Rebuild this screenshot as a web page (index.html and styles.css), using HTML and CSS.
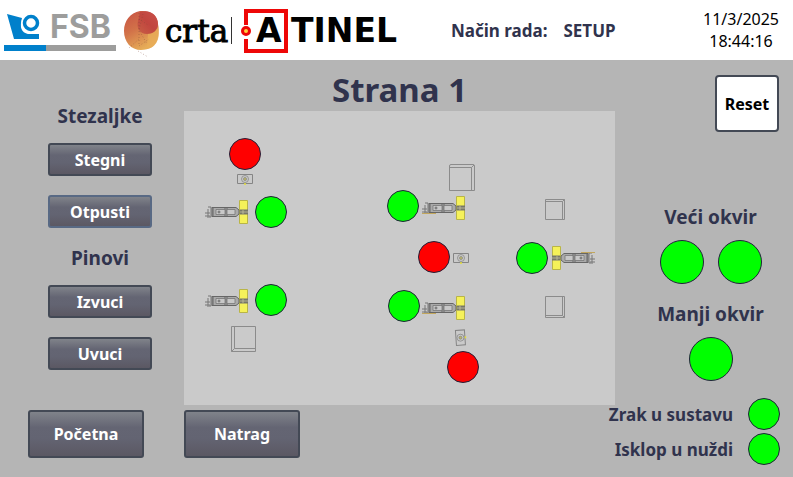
FILE: index.html
```html
<!DOCTYPE html>
<html lang="hr">
<head>
<meta charset="utf-8">
<meta name="viewport" content="width=device-width, initial-scale=1">
<title>Strana 1</title>
<link rel="stylesheet" href="styles.css">
</head>
<body>
<header class="topbar">
  <div class="logos">
    <svg width="120" height="60" viewBox="0 0 120 60" role="img" aria-label="FSB">
      <path d="M7 14 L22 18 Q18 32 28 34 H39 V39 H14 Z" fill="#0080cb"/>
      <circle cx="31" cy="24" r="10" fill="#fff"/>
      <circle cx="31" cy="23" r="6.5" fill="none" stroke="#0080cb" stroke-width="3.500"/>
      <path d="M24 33 Q30 37 39 34 V39 H22 Z" fill="#0080cb"/>
      <text class="logo-fsb" x="50" y="38">FSB</text>
      <path d="M4 45 H46 V51 H4 Z" fill="#0080cb"/>
      <path d="M46 45 H116 V51 H46 Z" fill="#9d9d9c"/>
    </svg>
    <svg width="114" height="60" viewBox="120 0 114 60" role="img" aria-label="crta">
      <defs>
        <linearGradient id="low" x1="0" y1="0" x2="0.5" y2="1"><stop offset="0" stop-color="#c75043"/><stop offset="0.5" stop-color="#d27249"/><stop offset="1" stop-color="#e6ad58"/></linearGradient>
        <linearGradient id="high" x1="0" y1="1" x2="1" y2="0"><stop offset="0" stop-color="#c85f45"/><stop offset="0.5" stop-color="#c1463f"/><stop offset="1" stop-color="#c9504a"/></linearGradient>
      </defs>
      <path d="M140 11 C151 10 158 16 158 24 C159 28 159 32 158 37 C157 46 149 50 141 50 C131 50 124 42 124 31 C124 21 130 13 140 11 Z" fill="url(#low)"/>
      <path d="M148 34 Q155 32 157 27 Q160 33 158 39 Q155 48 147 49 Z" fill="#e8ad58" opacity="0.8"/>
      <path d="M140 12 C151 9 158 16 158 24 C158 31 152 34 147 34 C140 34 136 28 138 21 Z" fill="url(#high)"/>
      <path d="M139 13 V46 L149 39 M143 14 L139 30 L147 44 M139 19 L148 25 M129 48 L140 38 M138 51 L148 57" fill="none" stroke="#7b4335" stroke-width="0.400" stroke-dasharray="1 2"/>
      <text class="logo-crta" x="165" y="42">crta</text>
      <path d="M231.500 17 V44" stroke="#333" stroke-width="1"/>
    </svg>
    <svg width="172" height="60" viewBox="234 0 172 60" role="img" aria-label="ATINEL">
      <path d="M246 25 V11 H286 V51 H246 V39" fill="none" stroke="#ee0707" stroke-width="4"/>
      <circle cx="246" cy="31" r="3.500" fill="#ffd23c" stroke="#ee0707" stroke-width="3"/>
      <text class="logo-atinel" x="256" y="42">A</text>
      <text class="logo-atinel" x="291" y="42">TINEL</text>
    </svg>
  </div>
  <p class="mode"><span>Način rada:</span><span>SETUP</span></p>
  <p class="clock"><span>11/3/2025</span><span>18:44:16</span></p>
</header>

<main class="screen">
  <h1 class="title">Strana 1</h1>

  <div class="controls">
    <section class="group">
      <h2 class="label">Stezaljke</h2>
      <button class="btn" type="button">Stegni</button>
      <button class="btn active" type="button">Otpusti</button>
    </section>
    <section class="group">
      <h2 class="label">Pinovi</h2>
      <button class="btn" type="button">Izvuci</button>
      <button class="btn" type="button">Uvuci</button>
    </section>
  </div>

  <div class="panel">
    <svg class="scene" viewBox="184 111 431 294">
      <defs>
        <g id="clamp">
          <path d="M34.500 0.500 H42.500 V23.500 H34.500 Z" fill="#f5f15a" stroke="#b9b546"/>
          <path d="M35 9.500 H43 V14.500 H35 Z" fill="#77776a"/>
          <path d="M35 12 H43 M38 10 V14" stroke="#c5c1a0" stroke-width="0.8"/>
          <path d="M7 7.500 H31 L34 10 V14 L31 16.500 H7 Z" fill="#aaa" stroke="#666"/>
          <path d="M8 8 V16 M20 7 V17 M22 7 V17" stroke="#666"/>
          <path d="M11 9.500 H20 V14.500 H11 Z M22 9.500 H30 V14.500 H22 Z" fill="#c8c8c8" stroke="#777" stroke-width="0.8"/>
          <circle cx="14" cy="12" r="1" fill="none" stroke="#555" stroke-width="0.8"/>
          <path d="M3 7 H6 V17 H2 M0 13 H5 M0 16 H5 M3 9 V16" fill="none" stroke="#777"/>
        </g>
        <g id="pin">
          <path d="M0.500 0.500 H15.500 V9.500 H0.500 Z" fill="none" stroke="#858585"/>
          <circle cx="8" cy="5" r="3.500" fill="none" stroke="#888" stroke-width="0.8"/>
          <circle cx="8" cy="5" r="1.500" fill="#bdb76b" stroke="#777" stroke-width="0.6"/>
          <path d="M7 10 H9" stroke="#e6df35" stroke-width="1.500"/>
        </g>
      </defs>
      <g fill="none" stroke="#8b8b8b">
        <path d="M231.500 326.500 H255.500 V351.500 H231.500 Z M234.500 326.500 V348.500 H255.500 M231.500 351.500 L234.500 348.500"/>
        <path d="M451 164.500 H473 Q474.500 164.500 474.500 166 V190.500 H449.500 V166 Q449.500 164.500 451 164.500 Z M450 167.500 H471.500 V190 M471.500 167.500 L474 165"/>
        <path d="M545.500 199.500 H564.500 V219.500 H545.500 Z M545.500 201.500 H562.500 V219.500 M562.500 201.500 L564.500 199.500"/>
        <path d="M545.500 296.500 H564.500 V317.500 H545.500 Z M562.500 296.500 V315.500 H545.500 M562.500 315.500 L564.500 317.500"/>
      </g>
      <use href="#clamp" x="205" y="200"/>
      <use href="#clamp" x="205" y="289"/>
      <use href="#clamp" x="422" y="196"/>
      <use href="#clamp" x="422" y="296"/>
      <use href="#clamp" transform="translate(595 246) scale(-1 1)"/>
      <path d="M422 213.500 H436 M422 313.500 H436 M581 252.500 H595" stroke="#c2a65c"/>
      <use href="#pin" x="237" y="174"/>
      <use href="#pin" x="453" y="253"/>
      <use href="#pin" transform="translate(456 346) rotate(-94)"/>
      <g stroke="#20223a" stroke-width="1">
        <g fill="#f00">
          <circle cx="245" cy="154" r="15.500"/>
          <circle cx="434" cy="257" r="15.500"/>
          <circle cx="463" cy="367" r="15.500"/>
        </g>
        <g fill="#0f0">
          <circle cx="271" cy="212" r="15.500"/>
          <circle cx="271" cy="300" r="15.500"/>
          <circle cx="403" cy="206" r="15.500"/>
          <circle cx="404" cy="306" r="15.500"/>
          <circle cx="532" cy="258" r="15.500"/>
        </g>
      </g>
    </svg>
  </div>

  <aside class="side">
    <button class="reset" type="button">Reset</button>
    <section class="frame">
      <h2 class="label">Veći okvir</h2>
      <div class="lamps"><span class="lamp"></span><span class="lamp"></span></div>
    </section>
    <section class="frame">
      <h2 class="label">Manji okvir</h2>
      <div class="lamps"><span class="lamp"></span></div>
    </section>
    <ul class="status">
      <li><span>Zrak u sustavu</span><span class="lamp small"></span></li>
      <li><span>Isklop u nuždi</span><span class="lamp small"></span></li>
    </ul>
  </aside>

  <nav class="nav">
    <button class="btn large" type="button">Početna</button>
    <button class="btn large" type="button">Natrag</button>
  </nav>
</main>
</body>
</html>
```

FILE: styles.css
```css
* {
  box-sizing: border-box;
}

body {
  margin: 0;
  min-height: 100vh;
  background: #b5b5b5;
  color: #30334d;
  font-family: "Noto Sans", "Open Sans", sans-serif;
  font-size: 16px;
}

h1, h2, p, ul {
  margin: 0;
  padding: 0;
}

button {
  font: inherit;
  font-weight: 700;
  padding: 0;
}

svg {
  display: block;
}

.topbar {
  display: flex;
  align-items: center;
  height: 60px;
  padding-right: 14px;
  background: #fff;
}

.logos {
  display: flex;
}

.logo-fsb {
  font: 700 32px Inter, sans-serif;
  fill: #9d9d9c;
}

.logo-crta {
  font: 31px "DejaVu Serif", serif;
  fill: #000;
  stroke: #000;
  stroke-width: 1px;
}

.logo-atinel {
  font: 700 33px "DejaVu Sans", sans-serif;
  fill: #000;
}

.mode {
  display: flex;
  gap: 16px;
  margin-left: 45px;
  font-size: 17px;
  font-weight: 700;
}

.clock {
  display: flex;
  flex-direction: column;
  align-items: center;
  margin-left: auto;
  color: #000;
  line-height: 22px;
}

.screen {
  display: grid;
  grid-template-columns: 184px minmax(0, 1fr) 12px 178px;
  grid-template-rows: 51px auto auto;
}

.title {
  grid-area: 1 / 2 / 2 / 4;
  align-self: center;
  padding-top: 8px;
  text-align: center;
  font-size: 33px;
  line-height: 40px;
}

.controls {
  grid-area: 1 / 1 / 3 / 2;
  display: flex;
  flex-direction: column;
  gap: 18px;
  padding: 44px 32px 0 48px;
}

.group {
  display: flex;
  flex-direction: column;
  gap: 19px;
}

.label {
  text-align: center;
  font-size: 19px;
  line-height: 24px;
}

.group .label {
  margin-bottom: -4px;
}

.btn {
  height: 33px;
  border: 2px solid #434955;
  border-radius: 3px;
  background: linear-gradient(#80838a, #646573 35%, #636472 60%, #5b5863);
  color: #fff;
}

.btn.active {
  border-color: #586984;
}

.btn.large {
  width: 116px;
  height: 48px;
}

.panel {
  grid-area: 2 / 2 / 3 / 4;
  background: #cacaca;
}

.scene {
  width: 100%;
}

.side {
  grid-area: 1 / 3 / 4 / 5;
  display: flex;
  flex-direction: column;
  padding: 15px 13px 12px 4px;
}

.reset {
  align-self: flex-end;
  width: 64px;
  height: 57px;
  margin-right: 1px;
  border: 2px solid #434955;
  border-radius: 4px;
  background: #fff;
  color: #000;
}

.frame {
  margin-top: 18px;
  padding-left: 34px;
}

.reset + .frame {
  margin-top: 73px;
}

.lamps {
  display: flex;
  justify-content: center;
  gap: 14px;
  margin-top: 11px;
}

.lamp {
  width: 44px;
  height: 44px;
  border: 1px solid #20223a;
  border-radius: 50%;
  background: #0f0;
}

.lamp.small {
  width: 32px;
  height: 32px;
}

.status {
  display: flex;
  flex-direction: column;
  gap: 3px;
  margin-top: auto;
  list-style: none;
  font-size: 17px;
  font-weight: 700;
}

.status li {
  display: flex;
  align-items: center;
  justify-content: flex-end;
  gap: 15px;
}

.nav {
  grid-area: 3 / 1 / 4 / 3;
  display: flex;
  gap: 40px;
  padding: 5px 0 19px 28px;
}
```
